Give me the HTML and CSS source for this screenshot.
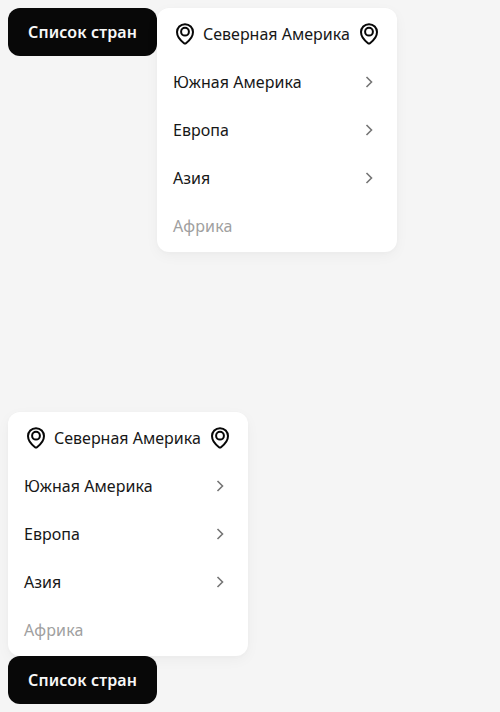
FILE: index.html
```html
<!DOCTYPE html>
<html lang="ru">
<head>
<meta charset="utf-8">
<title>Список стран</title>
<link rel="stylesheet" href="styles.css">
</head>
<body>
<svg class="defs" aria-hidden="true">
<symbol id="pin" viewBox="0 0 24 24"><path d="M12 2.200C7.400 2.200 4 5.700 4 10.100c0 4.400 3.400 8.400 7 11.100a1.650 1.650 0 0 0 2 0c3.600-2.700 7-6.700 7-11.100C20 5.700 16.600 2.200 12 2.200Z"/><circle cx="12" cy="9.700" r="3.900"/></symbol>
<symbol id="chevron" viewBox="0 0 16 16"><path d="m5.500 3 5 5-5 5"/></symbol>
</svg>
<main class="page">
<section class="example">
<button class="trigger"><span class="label">Список стран</span></button>
<ul class="menu">
<li class="item"><svg class="pin"><use href="#pin"/></svg><span class="text region">Северная Америка</span><svg class="pin"><use href="#pin"/></svg></li>
<li class="item"><span class="text">Южная Америка</span><svg class="chevron"><use href="#chevron"/></svg></li>
<li class="item"><span class="text">Европа</span><svg class="chevron"><use href="#chevron"/></svg></li>
<li class="item"><span class="text">Азия</span><svg class="chevron"><use href="#chevron"/></svg></li>
<li class="item disabled"><span class="text">Африка</span></li>
</ul>
</section>
<section class="example upward">
<ul class="menu">
<li class="item"><svg class="pin"><use href="#pin"/></svg><span class="text region">Северная Америка</span><svg class="pin"><use href="#pin"/></svg></li>
<li class="item"><span class="text">Южная Америка</span><svg class="chevron"><use href="#chevron"/></svg></li>
<li class="item"><span class="text">Европа</span><svg class="chevron"><use href="#chevron"/></svg></li>
<li class="item"><span class="text">Азия</span><svg class="chevron"><use href="#chevron"/></svg></li>
<li class="item disabled"><span class="text">Африка</span></li>
</ul>
<button class="trigger"><span class="label">Список стран</span></button>
</section>
</main>
</body>
</html>
```

FILE: styles.css
```css
* { box-sizing: border-box; }
body { margin: 0; background: #f5f5f5; color: #171717; font: 16px/24px "Noto Sans", sans-serif; }
.defs { position: absolute; width: 0; height: 0; }
.page { height: 712px; padding: 8px; display: flex; flex-direction: column; justify-content: space-between; }
.example { display: flex; align-items: flex-start; }
.upward { flex-direction: column; }
.trigger { width: 149px; height: 48px; padding: 0 20px; border: 0; border-radius: 12px; background: #080808; color: #f8f8f8; font: 600 16px/24px "Noto Sans", sans-serif; letter-spacing: .11px; white-space: nowrap; text-align: left; }
.menu { width: 240px; height: 244px; margin: 0; padding: 2px 0; list-style: none; background: #fff; border-radius: 12px; box-shadow: 0 4px 14px rgba(8,8,8,.04), 0 1px 4px rgba(8,8,8,.02); }
.item { height: 48px; padding: 0 16px; display: flex; align-items: center; white-space: nowrap; }
.pin { width: 24px; height: 24px; flex: none; fill: none; stroke: #080808; stroke-width: 2; }
.text { flex: 1; letter-spacing: .04px; }
.region { margin: 0 6px; letter-spacing: 0; }
.chevron { width: 16px; height: 16px; margin-right: 4px; fill: none; stroke: #757575; stroke-width: 1.6; }
.disabled { color: #a0a0a0; }
.disabled .text { letter-spacing: .18px; }
```
